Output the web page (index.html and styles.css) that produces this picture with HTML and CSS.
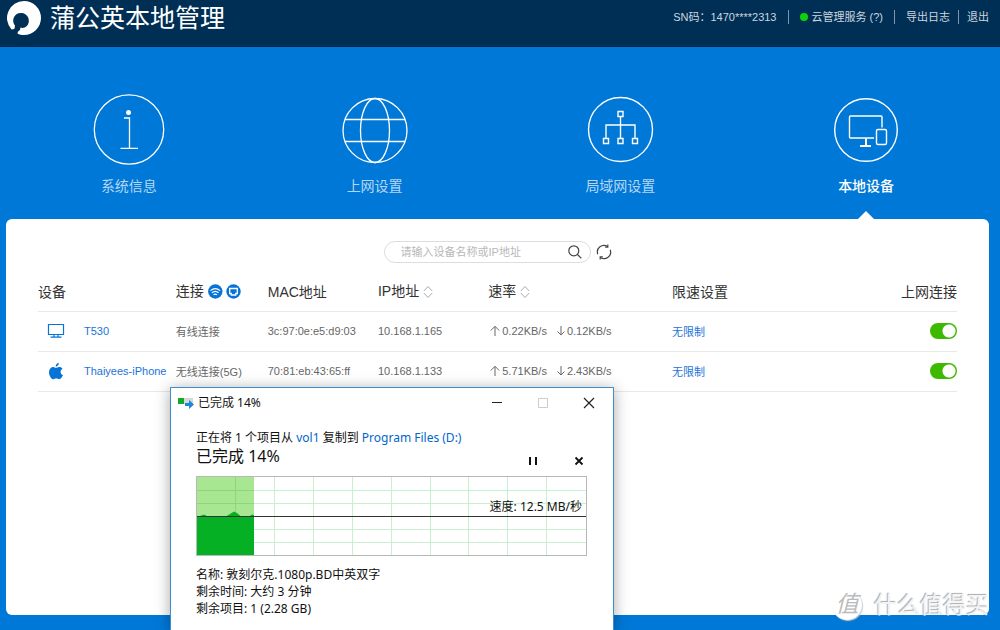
FILE: index.html
```html
<!DOCTYPE html>
<html lang="zh-CN">
<head>
<meta charset="utf-8">
<title>蒲公英本地管理</title>
<link rel="stylesheet" href="styles.css">
</head>
<body>
<div class="page">
  <header class="topbar">
    <h1 class="brand">
      <svg class="brand-logo" width="36" height="36" viewBox="0 0 36 36" aria-hidden="true">
        <path fill="#fff" d="M18 1A17 17 0 0 1 18 35C15.500 35 13.300 34.400 11.500 33.400C11.500 32 12.500 31 14 30L14.500 27.600C18.500 29 22.800 25.600 22.800 21A7.800 7.800 0 1 0 9 25.700C8.500 26.500 9 27.800 8.500 28.600C7.800 29.400 6.500 29.300 5.500 29.500A17 17 0 0 1 18 1Z"/>
      </svg>
      <span>蒲公英本地管理</span>
    </h1>
    <div class="account">
      <span class="serial">SN码：1470****2313</span>
      <a class="account-link cloud" href="#cloud"><span class="dot"></span>云管理服务 (?)</a>
      <a class="account-link log" href="#log">导出日志</a>
      <a class="account-link exit" href="#exit">退出</a>
    </div>
  </header>

  <nav class="tabs">
    <a class="tab" href="#system">
      <svg width="72" height="72" viewBox="0 0 72 72" fill="none" stroke="#fff" stroke-width="1.300" aria-hidden="true">
        <circle cx="36" cy="35.500" r="34.700"/>
        <circle cx="35.500" cy="18.500" r="2.500" fill="#fff" stroke="none"/>
        <path d="M31 24H36.500V54M27.500 54.300H45"/>
      </svg>
      <span>系统信息</span>
    </a>
    <a class="tab" href="#internet">
      <svg width="72" height="72" viewBox="0 0 72 72" fill="none" stroke="#fff" stroke-width="1.300" aria-hidden="true">
        <circle cx="36" cy="36.500" r="32"/>
        <ellipse cx="36" cy="36.500" rx="14.500" ry="32"/>
        <path d="M6 25.500H66M6 47.500H66"/>
      </svg>
      <span>上网设置</span>
    </a>
    <a class="tab" href="#lan">
      <svg width="72" height="72" viewBox="0 0 72 72" fill="none" stroke="#fff" stroke-width="1.400" aria-hidden="true">
        <circle cx="36.500" cy="35.500" r="32"/>
        <path d="M36.500 23V44M22 44V31H51V44"/>
        <path d="M34 17.500H39V22.500H34ZM34 44.500H39V49.500H34ZM19.500 44.500H24.500V49.500H19.500ZM48.500 44.500H53.500V49.500H48.500Z"/>
      </svg>
      <span>局域网设置</span>
    </a>
    <a class="tab active" href="#devices">
      <svg width="72" height="72" viewBox="0 0 72 72" fill="none" stroke="#fff" stroke-width="1.400" aria-hidden="true">
        <circle cx="36" cy="36" r="31.300"/>
        <path d="M52 33.500V23Q52 22 51 22H20.500Q19.500 22 19.500 23V43Q19.500 44 20.500 44H44"/>
        <path stroke-width="2" d="M36 44V52M30 52H41"/>
        <rect x="46.500" y="35.500" width="10" height="15" rx="1.500"/>
      </svg>
      <span>本地设备</span>
    </a>
  </nav>

  <main class="panel">
    <form class="search">
      <div class="search-box">
        <input class="search-input" type="text" aria-label="搜索设备" placeholder="请输入设备名称或IP地址">
        <button class="icon-button" type="button" aria-label="搜索">
          <svg width="14" height="14" viewBox="0 0 14 14" fill="none" stroke="#444" stroke-width="1.200"><circle cx="5.800" cy="5.800" r="5"/><path d="M9.500 9.500L13.300 13.300"/></svg>
        </button>
      </div>
      <button class="icon-button" type="button" aria-label="刷新">
        <svg width="16" height="16" viewBox="0 0 16 16" fill="none" stroke="#444" stroke-width="1.200"><path d="M1.800 10.200A6.500 6.500 0 0 1 11.600 2.600M4.400 13.400A6.500 6.500 0 0 0 14.200 5.800"/><path d="M11.800 .6V3.200H9.200M4.200 15.400V12.800H6.800"/></svg>
      </button>
    </form>

    <table class="devices">
      <colgroup><col class="c-icon"><col class="c-name"><col class="c-link"><col class="c-mac"><col class="c-ip"><col class="c-rate"><col class="c-limit"><col class="c-net"></colgroup>
      <thead>
        <tr>
          <th colspan="2">设备</th>
          <th><span class="head">连接
            <svg width="33" height="15" viewBox="0 0 33 15" fill="none" stroke="#fff" aria-hidden="true">
              <circle cx="7.300" cy="7.500" r="7.200" fill="#0674d6" stroke="none"/>
              <path stroke-width="1.200" d="M2.500 6.600Q7.300 2.600 12.100 6.600M4 8.800Q7.300 6 10.600 8.800M5.600 10.700Q7.300 9.400 9 10.700"/>
              <circle cx="25.500" cy="7.500" r="7.200" fill="#0674d6" stroke="none"/>
              <path stroke-width="1.300" d="M21.700 4.500H29.300V9.500H27.800V11H23.200V9.500H21.700Z"/>
            </svg></span></th>
          <th>MAC地址</th>
          <th><button class="sort" type="button">IP地址<svg width="10" height="14" viewBox="0 0 10 14" fill="none" stroke="#aaa"><path d="M.8 6L5 1.500L9.200 6M.8 8L5 12.500L9.200 8"/></svg></button></th>
          <th><button class="sort" type="button">速率<svg width="10" height="14" viewBox="0 0 10 14" fill="none" stroke="#aaa"><path d="M.8 6L5 1.500L9.200 6M.8 8L5 12.500L9.200 8"/></svg></button></th>
          <th>限速设置</th>
          <th class="right">上网连接</th>
        </tr>
      </thead>
      <tbody>
        <tr>
          <td class="kind"><svg width="18" height="16" viewBox="0 0 18 16" fill="none" stroke="#0674d6" stroke-width="1.200" aria-hidden="true"><path d="M1.500 1.500H16.500V11.500H1.500ZM7 11.500V14M11 11.500V14M3.500 14.200H14.500"/></svg></td>
          <td><a href="#t530">T530</a></td>
          <td>有线连接</td>
          <td>3c:97:0e:e5:d9:03</td>
          <td>10.168.1.165</td>
          <td><span class="rates"><span class="rate"><svg width="10" height="12" viewBox="0 0 10 12" fill="none" stroke="#666"><path d="M5 11V1.500M.8 5.500L5 1.300L9.200 5.500"/></svg>0.22KB/s</span><span class="rate"><svg width="8" height="12" viewBox="0 0 8 12" fill="none" stroke="#666"><path d="M4 1V10M.5 6.500L4 10L7.500 6.500"/></svg>0.12KB/s</span></span></td>
          <td><a href="#limit1">无限制</a></td>
          <td class="right"><input class="switch" type="checkbox" aria-label="T530 上网连接" checked></td>
        </tr>
        <tr>
          <td class="kind"><svg width="18" height="18" viewBox="0 0 18 18" fill="#0674d6" aria-hidden="true"><path d="M11.800 .8C12 2.700 10.600 4.500 8.700 4.700C8.500 2.800 10.200 1 11.800 .8ZM8.900 5.900C9.700 5.900 10.500 5 12.200 5C13.700 5 14.900 5.700 15.500 6.700C12.700 8.400 13.200 12 16 13.100C15.400 14.800 13.800 17.200 12.300 17.200C11.200 17.200 10.700 16.500 9.300 16.500C7.900 16.500 7.400 17.200 6.400 17.200C4.400 17.200 2 13.500 2 10.400C2 7 4.100 5.100 6.200 5.100C7.500 5.100 8.300 5.900 8.900 5.900Z"/></svg></td>
          <td><a href="#iphone">Thaiyees-iPhone</a></td>
          <td>无线连接(5G)</td>
          <td>70:81:eb:43:65:ff</td>
          <td>10.168.1.133</td>
          <td><span class="rates"><span class="rate"><svg width="10" height="12" viewBox="0 0 10 12" fill="none" stroke="#666"><path d="M5 11V1.500M.8 5.500L5 1.300L9.200 5.500"/></svg>5.71KB/s</span><span class="rate"><svg width="8" height="12" viewBox="0 0 8 12" fill="none" stroke="#666"><path d="M4 1V10M.5 6.500L4 10L7.500 6.500"/></svg>2.43KB/s</span></span></td>
          <td><a href="#limit2">无限制</a></td>
          <td class="right"><input class="switch" type="checkbox" aria-label="Thaiyees-iPhone 上网连接" checked></td>
        </tr>
      </tbody>
    </table>
  </main>

  <div class="watermark">
    <span class="watermark-mark">值</span>
    <span>什么值得买</span>
  </div>

  <section class="dialog" aria-label="复制进度">
    <div class="titlebar">
      <svg width="16" height="12" viewBox="0 0 16 12" aria-hidden="true"><path fill="#d8d8d8" d="M0 1H15V7H0Z"/><path fill="#12a92b" d="M0 1H6V7H0Z"/><path fill="#1f86dc" d="M7 6H11V3L16 7.500L11 12V9H7Z"/></svg>
      <span class="title">已完成 14%</span>
      <button class="icon-button" type="button" aria-label="最小化"><svg width="12" height="12" viewBox="0 0 12 12" stroke="#222"><path d="M1 5.500H11"/></svg></button>
      <button class="icon-button" type="button" aria-label="最大化" disabled><svg width="12" height="12" viewBox="0 0 12 12" fill="none" stroke="#ccc"><path d="M1.500 1.500H10.500V10.500H1.500Z"/></svg></button>
      <button class="icon-button" type="button" aria-label="关闭"><svg width="12" height="12" viewBox="0 0 12 12" stroke="#222" stroke-width="1.200"><path d="M1 1L11 11M11 1L1 11"/></svg></button>
    </div>
    <div class="dialog-body">
      <p class="line">正在将 1 个项目从 <a href="#vol1">vol1</a> 复制到 <a href="#d">Program Files (D:)</a></p>
      <div class="progress-row">
        <p class="progress-text">已完成 14%</p>
        <button class="icon-button" type="button" aria-label="暂停"><svg width="10" height="10" viewBox="0 0 10 10" stroke="#111" stroke-width="2"><path d="M2 1V9M8 1V9"/></svg></button>
        <button class="icon-button" type="button" aria-label="取消"><svg width="10" height="10" viewBox="0 0 10 10" stroke="#111" stroke-width="1.800"><path d="M1.500 1.500L8.500 8.500M8.500 1.500L1.500 8.500"/></svg></button>
      </div>
      <div class="chart">
        <svg class="chart-plot" viewBox="0 0 391 80" fill="none" aria-hidden="true">
          <path fill="#a8e692" d="M1 1H58V79H1Z"/>
          <path stroke="#c6f0cf" d="M78.500 1V79M117.500 1V79M156.500 1V79M195.500 1V79M234.500 1V79M272.500 1V79M311.500 1V79M350.500 1V79M58 14.500H390M58 27.500H390M58 53.500H390M58 66.500H390"/>
          <path stroke="#8cd77e" d="M39.500 1V41M1 14.500H58M1 27.500H58"/>
          <path fill="#06b025" d="M1 41L8 38.500L13 41L29 41L34 38L38 35.500L41 37L45 40.500L53 40.500L56 38.500L58 39V79H1Z"/>
          <path stroke="#333" d="M1 40.500H390"/>
          <rect x=".5" y=".5" width="390" height="79" stroke="#b8b8b8"/>
        </svg>
        <span class="speed">速度: 12.5 MB/秒</span>
      </div>
      <ul class="details">
        <li>名称: 敦刻尔克.1080p.BD中英双字</li>
        <li>剩余时间: 大约 3 分钟</li>
        <li>剩余项目: 1 (2.28 GB)</li>
      </ul>
    </div>
  </section>
</div>
</body>
</html>
```
FILE: styles.css
```css
* { box-sizing: border-box; }
body {
  margin: 0;
  font-family: "Liberation Sans", "Noto Sans CJK SC", sans-serif;
  font-size: 11px;
  color: #666;
  background: #0078d7;
}
h1, p, ul { margin: 0; padding: 0; font-weight: 400; }
a { color: #1a73d9; text-decoration: none; }
svg { display: block; flex: none; }
button {
  padding: 0;
  border: 0;
  background: none;
  font: inherit;
  color: inherit;
}
.icon-button { display: flex; }
.page {
  position: relative;
  display: flex;
  flex-direction: column;
  min-height: 100vh;
  overflow: hidden;
}

/* Top bar */
.topbar {
  display: flex;
  justify-content: space-between;
  height: 47px;
  padding: 0 11px 0 6px;
  background: #002f56;
  border-bottom: 1px solid #00264a;
}
.brand {
  display: flex;
  gap: 8px;
  height: 36px;
  align-items: center;
  font-size: 25px;
  line-height: 36px;
  color: #fff;
}
.account {
  display: flex;
  align-items: center;
  height: 34px;
  line-height: 14px;
  color: #ccd5dd;
}
.account-link {
  display: flex;
  align-items: center;
  margin-left: 11px;
  padding-left: 11px;
  border-left: 1px solid #7f95a9;
  color: #ccd5dd;
}
.exit { margin-left: 8px; padding-left: 8px; }
.dot {
  width: 8px;
  height: 8px;
  margin-right: 4px;
  border-radius: 50%;
  background: #0bd20b;
}

/* Section tabs */
.tabs {
  display: grid;
  grid-template-columns: repeat(4, 1fr);
  margin: 0 11px 0 6px;
  padding-top: 47px;
}
.tab {
  position: relative;
  display: flex;
  flex-direction: column;
  align-items: center;
  gap: 10px;
  padding-bottom: 23px;
  font-size: 14px;
  line-height: 20px;
  color: #b5d7f4;
}
.tab.active { color: #fff; font-weight: 500; }
.tab.active::after {
  content: "";
  position: absolute;
  bottom: 0;
  border: 8px solid transparent;
  border-top: 0;
  border-bottom-color: #fff;
}

/* Device list */
.panel {
  flex: 1;
  margin: 0 11px 15px 6px;
  padding: 22px 32px;
  border-radius: 6px;
  background: #fff;
}
.search {
  display: flex;
  justify-content: center;
  align-items: center;
  gap: 5px;
}
.search-box {
  display: flex;
  align-items: center;
  width: 207px;
  height: 22px;
  padding: 0 8px 0 16px;
  border: 1px solid #ddd;
  border-radius: 11px;
}
.search-input {
  flex: 1;
  min-width: 0;
  padding: 0;
  border: 0;
  outline: 0;
  background: none;
  font: inherit;
}
.search-input::placeholder { color: #b8b8b8; }
.devices {
  width: 100%;
  margin-top: 8px;
  border-collapse: collapse;
  table-layout: fixed;
}
.c-icon { width: 5%; }
.c-name { width: 10%; }
.c-link { width: 10%; }
.c-mac { width: 12%; }
.c-ip { width: 12%; }
.c-rate { width: 20%; }
.c-limit { width: 16%; }
.c-net { width: 15%; }
.devices th, .devices td {
  height: 40px;
  padding: 0;
  border-bottom: 1px solid #e8e8e8;
  text-align: left;
  white-space: nowrap;
}
.devices th {
  font-size: 14px;
  font-weight: 400;
  color: #333;
}
.devices .right { text-align: right; }
.devices .kind { padding-left: 9px; }
.head, .sort { display: flex; align-items: center; gap: 4px; line-height: 20px; }
.head svg, .sort svg { margin-top: 2px; }
.rates { display: flex; gap: 10px; padding-left: 2px; }
.rate { display: flex; align-items: center; gap: 2px; }
.switch {
  appearance: none;
  display: block;
  width: 27px;
  height: 16px;
  margin: 0 0 0 auto;
  border-radius: 8px;
  background: radial-gradient(circle at 19px 8px, #fff 6px, #3dba00 7px);
}

/* Site mark in the corner */
.watermark {
  position: absolute;
  right: 11px;
  bottom: 10px;
  display: flex;
  align-items: center;
  gap: 12px;
  font-size: 23px;
  line-height: 30px;
  color: #f4f4f4;
  text-shadow: -1px -1px 1px #aaa;
}
.watermark-mark {
  width: 30px;
  height: 30px;
  border-radius: 50%;
  background: #fff;
  box-shadow: 1px 1px 1px #ccc;
  font-style: italic;
  line-height: 28px;
  text-align: center;
  color: #bbb;
  text-shadow: none;
}

/* File copy window */
.dialog {
  position: absolute;
  top: 387px;
  left: 170px;
  bottom: 0;
  width: 444px;
  border: 1px solid #3f8fcf;
  border-bottom: 0;
  background: #fff;
  box-shadow: 0 2px 14px rgba(0, 0, 0, 0.35);
  font-family: "Noto Sans", "Noto Sans CJK SC", sans-serif;
  font-size: 12px;
  line-height: 17px;
  color: #111;
}
.dialog a { color: #0066cc; }
.titlebar {
  display: flex;
  align-items: center;
  gap: 34px;
  height: 29px;
  padding: 0 18px 0 7px;
}
.title { flex: 1; margin-left: -30px; }
.dialog-body { padding: 12px 26px 0 25px; }
.progress-row {
  display: flex;
  align-items: flex-end;
  gap: 36px;
  height: 20px;
  padding-right: 3px;
}
.progress-text { flex: 1; font-size: 16px; line-height: 20px; }
.chart { position: relative; margin-top: 10px; }
.chart-plot { width: 100%; }
.speed { position: absolute; right: 5px; top: 22px; }
.details { margin-top: 10px; list-style: none; }
```
